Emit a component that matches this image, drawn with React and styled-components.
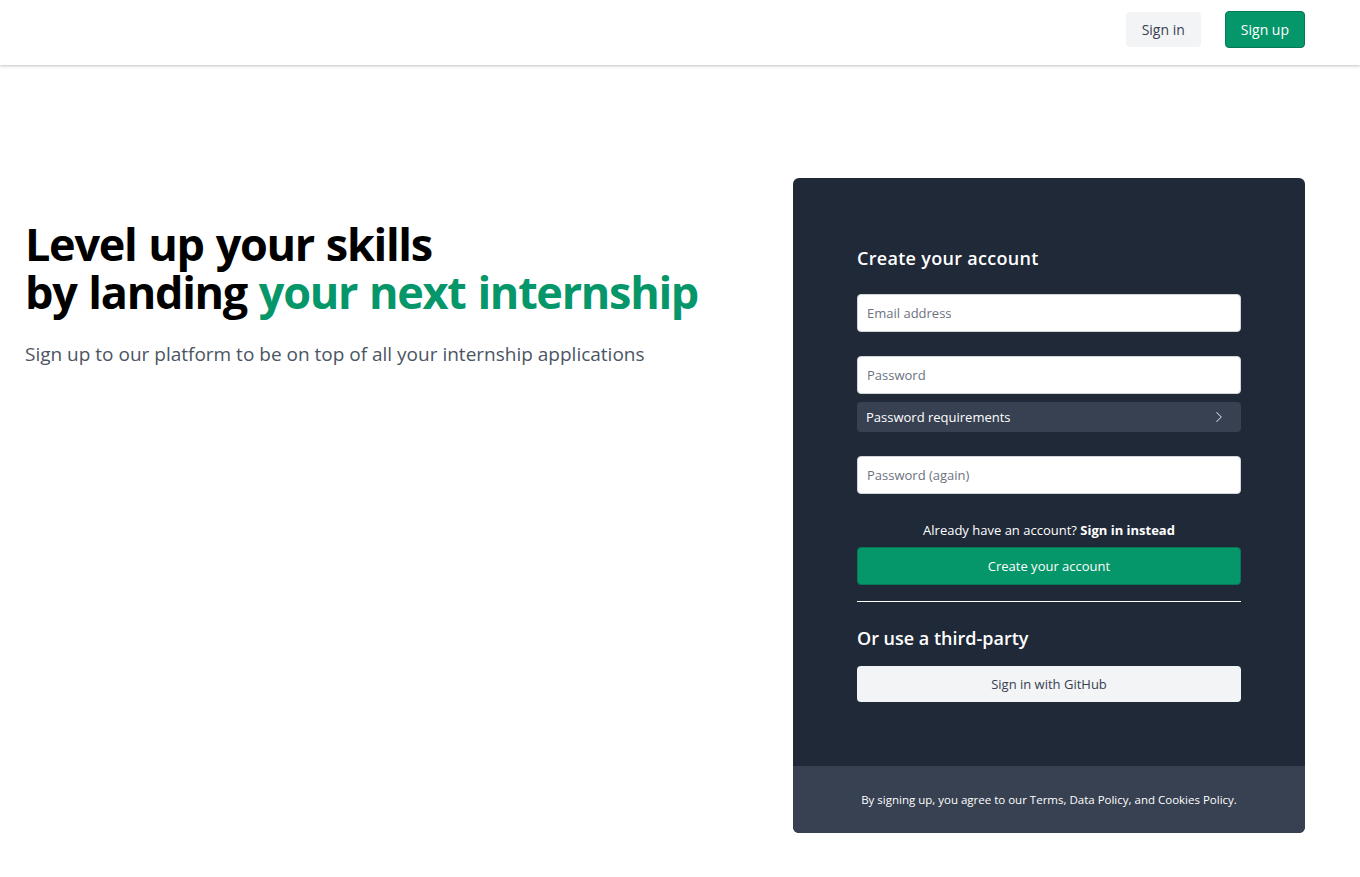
import React from "react";
import styled, { createGlobalStyle } from "styled-components";
import { ChevronRight } from "lucide-react";

const GlobalStyle = createGlobalStyle`
  * { box-sizing: border-box; }
  body {
    margin: 0;
    background: #fff;
    font-family: "Open Sans", "Noto Sans", Arial, sans-serif;
    color: #111827;
  }
`;

const Header = styled.header`
  height: 65px;
  display: flex;
  align-items: flex-start;
  justify-content: flex-end;
  gap: 24px;
  padding: 11px 55px 0 24px;
  background: #fff;
  box-shadow: 0 1px 3px rgba(0, 0, 0, 0.18), 0 1px 2px rgba(0, 0, 0, 0.08);
`;

const NavButton = styled.button`
  font-family: inherit;
  font-size: 14px;
  height: ${(p) => (p.primary ? "37px" : "35px")};
  margin-top: ${(p) => (p.primary ? "0" : "1px")};
  padding: 0 ${(p) => (p.primary ? "15px" : "16px")};
  border-radius: 4px;
  cursor: pointer;
  border: ${(p) => (p.primary ? "1px solid #047857" : "none")};
  background: ${(p) => (p.primary ? "#059669" : "#f3f4f6")};
  color: ${(p) => (p.primary ? "#fff" : "#374151")};
`;

const Main = styled.main`
  display: flex;
  justify-content: space-between;
  align-items: flex-start;
  padding: 113px 55px 40px 25px;
`;

const Hero = styled.section`
  padding-top: 42px;
`;

const Title = styled.h1`
  margin: 0;
  font-size: 45px;
  line-height: 48px;
  font-weight: 700;
  letter-spacing: -1.3px;
  word-spacing: 1.5px;
  color: #000;
  span {
    color: #059669;
  }
`;

const Subtitle = styled.p`
  margin: 24px 0 0;
  font-size: 19px;
  line-height: 28px;
  color: #4b5563;
`;

const Card = styled.div`
  width: 512px;
  border-radius: 6px;
  overflow: hidden;
  background: #1f2937;
`;

const CardBody = styled.div`
  padding: 66px 64px 64px;
  display: flex;
  flex-direction: column;
`;

const CardTitle = styled.h2`
  margin: 0 0 ${(p) => p.gap || "24px"};
  font-size: 18px;
  line-height: 28px;
  font-weight: 600;
  color: #fff;
  letter-spacing: ${(p) => p.spacing || "0"};
`;

const Input = styled.input`
  width: 100%;
  height: 38px;
  border: 1px solid #d1d5db;
  border-radius: 4px;
  padding: 0 9px;
  font-family: inherit;
  font-size: 13px;
  color: #111827;
  background: #fff;
  margin-bottom: ${(p) => p.mb || "24px"};
  &::placeholder {
    color: #6b7280;
  }
`;

const Requirements = styled.div`
  height: 30px;
  border-radius: 4px;
  background: #374151;
  display: flex;
  align-items: center;
  justify-content: space-between;
  padding: 0 13px 0 9px;
  margin-bottom: 24px;
  font-size: 13px;
  color: #fff;
  svg {
    color: #d1d5db;
  }
`;

const AltText = styled.p`
  margin: 26px 0 7px;
  text-align: center;
  font-size: 13px;
  line-height: 20px;
  color: #fff;
  b {
    font-weight: 700;
  }
`;

const WideButton = styled.button`
  width: 100%;
  height: ${(p) => (p.primary ? "38px" : "36px")};
  border-radius: 4px;
  font-family: inherit;
  font-size: 13px;
  cursor: pointer;
  border: ${(p) => (p.primary ? "1px solid #047857" : "none")};
  background: ${(p) => (p.primary ? "#059669" : "#f3f4f6")};
  color: ${(p) => (p.primary ? "#fff" : "#374151")};
`;

const Divider = styled.hr`
  width: 100%;
  border: none;
  border-top: 1px solid #fff;
  margin: 16px 0 22px;
`;

const CardFooter = styled.div`
  background: #374151;
  height: 67px;
  display: flex;
  align-items: center;
  justify-content: center;
  font-size: 11.5px;
  color: #fff;
`;

export default function App() {
  return (
    <>
      <GlobalStyle />
      <Header>
        <NavButton>Sign in</NavButton>
        <NavButton primary>Sign up</NavButton>
      </Header>
      <Main>
        <Hero>
          <Title>
            Level up your skills
            <br />
            by landing <span>your next internship</span>
          </Title>
          <Subtitle>
            Sign up to our platform to be on top of all your internship
            applications
          </Subtitle>
        </Hero>
        <Card>
          <CardBody>
            <CardTitle gap="22px" spacing="0.3px">
              Create your account
            </CardTitle>
            <Input type="email" placeholder="Email address" />
            <Input type="password" placeholder="Password" mb="8px" />
            <Requirements>
              <span>Password requirements</span>
              <ChevronRight size={18} strokeWidth={1.4} />
            </Requirements>
            <Input type="password" placeholder="Password (again)" mb="0" />
            <AltText>
              Already have an account? <b>Sign in instead</b>
            </AltText>
            <WideButton primary>Create your account</WideButton>
            <Divider />
            <CardTitle gap="14px">Or use a third-party</CardTitle>
            <WideButton>Sign in with GitHub</WideButton>
          </CardBody>
          <CardFooter>
            By signing up, you agree to our Terms, Data Policy, and Cookies
            Policy.
          </CardFooter>
        </Card>
      </Main>
    </>
  );
}
